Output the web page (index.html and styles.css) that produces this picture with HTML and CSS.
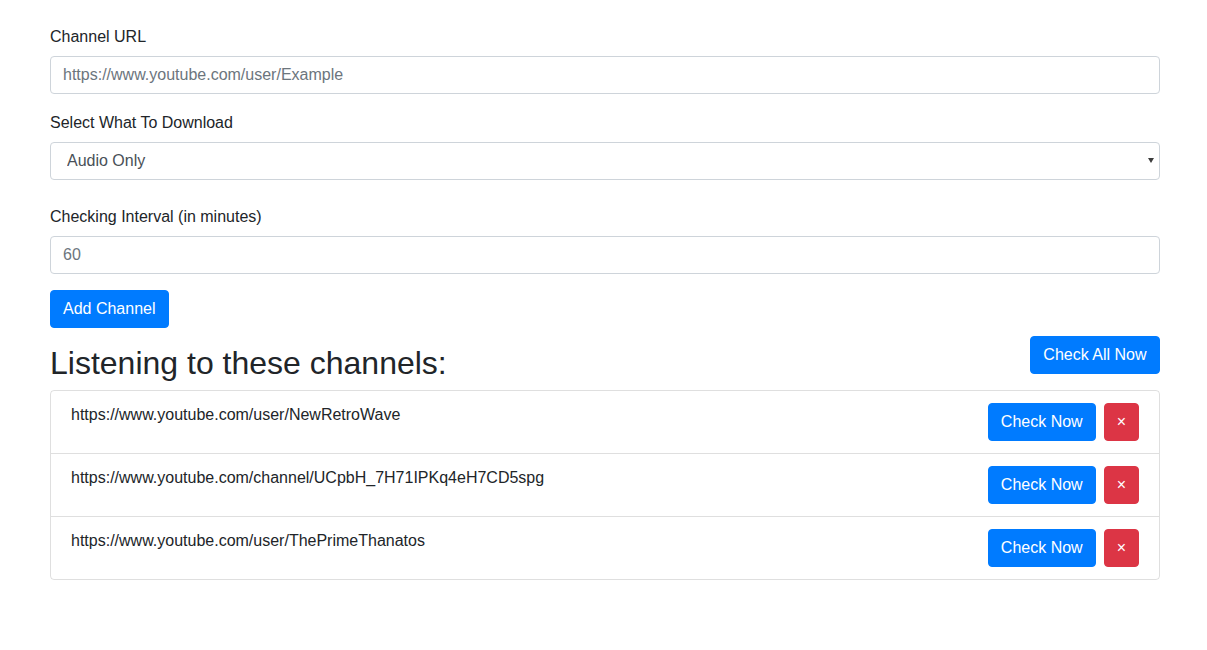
FILE: index.html
```html
<!DOCTYPE html>
<html>
<head>
<meta charset="utf-8">
<link rel="stylesheet" href="styles.css">
</head>
<body>
<div class="container">
  <div class="form-group">
    <label class="label">Channel URL</label>
    <input class="input" type="text" placeholder="https://www.youtube.com/user/Example">
  </div>
  <div class="form-group select-group">
    <label class="label">Select What To Download</label>
    <div class="select-wrap">
      <select class="select">
        <option>Audio Only</option>
      </select>
    </div>
  </div>
  <div class="form-group">
    <label class="label">Checking Interval (in minutes)</label>
    <input class="input" type="text" placeholder="60">
  </div>
  <button class="btn btn-primary">Add Channel</button>
  <div class="list-header">
    <h2 class="title">Listening to these channels:</h2>
    <button class="btn btn-primary btn-all">Check All Now</button>
  </div>
  <ul class="list">
    <li class="item">
      <span class="url">https://www.youtube.com/user/NewRetroWave</span>
      <div class="actions"><button class="btn btn-primary">Check Now</button><button class="btn btn-danger">×</button></div>
    </li>
    <li class="item">
      <span class="url">https://www.youtube.com/channel/UCpbH_7H71IPKq4eH7CD5spg</span>
      <div class="actions"><button class="btn btn-primary">Check Now</button><button class="btn btn-danger">×</button></div>
    </li>
    <li class="item">
      <span class="url">https://www.youtube.com/user/ThePrimeThanatos</span>
      <div class="actions"><button class="btn btn-primary">Check Now</button><button class="btn btn-danger">×</button></div>
    </li>
  </ul>
</div>
</body>
</html>
```

FILE: styles.css
```css
* { box-sizing: border-box; }
html, body { margin: 0; padding: 0; background: #fff; }
body {
  font-family: "Liberation Sans", Arial, sans-serif;
  font-size: 16px;
  line-height: 1.5;
  color: #212529;
}
.container {
  width: 1140px;
  padding: 24px 15px 0 15px;
  margin: 0 0 0 35px;
}
.form-group { margin-bottom: 16px; }
.select-group { margin-bottom: 24px; }
.label {
  display: block;
  margin-bottom: 8px;
  line-height: 24px;
  position: relative;
  top: 1px;
}
.input, .select {
  display: block;
  width: 100%;
  height: 38px;
  padding: 6px 12px;
  font-family: inherit;
  font-size: 16px;
  line-height: 24px;
  color: #495057;
  background: #fff;
  border: 1px solid #ced4da;
  border-radius: 4px;
  outline: none;
}
.input::placeholder { color: #6c757d; opacity: 1; }
.select-wrap { position: relative; }
.select {
  -webkit-appearance: none;
  appearance: none;
  padding-left: 16px;
}
.select-wrap::after {
  content: "";
  position: absolute;
  right: 6px;
  top: 16px;
  border-left: 3.5px solid transparent;
  border-right: 3.5px solid transparent;
  border-top: 5px solid #3c3c3c;
}
.btn {
  display: inline-block;
  height: 38px;
  padding: 6px 12px;
  font-family: inherit;
  font-size: 16px;
  line-height: 24px;
  color: #fff;
  border: 1px solid transparent;
  border-radius: 4px;
  cursor: pointer;
}
.btn-all { padding: 6px 12.5px; }
.btn-primary { background: #007bff; border-color: #007bff; }
.btn-danger { background: #dc3545; border-color: #dc3545; }
.list-header {
  display: flex;
  justify-content: space-between;
  align-items: flex-start;
  margin-top: 8px;
}
.title {
  margin: 8px 0 0 0;
  font-size: 32px;
  font-weight: 500;
  line-height: 38.4px;
}
.list {
  list-style: none;
  margin: 7.6px 0 0 0;
  padding: 0;
  border: 1px solid rgba(0,0,0,.125);
  border-radius: 4px;
}
.item {
  display: flex;
  justify-content: space-between;
  align-items: flex-start;
  padding: 12px 20px;
  border-top: 1px solid rgba(0,0,0,.125);
}
.item:first-child { border-top: none; }
.url { line-height: 24px; margin-top: 0; }
.actions { display: flex; gap: 8px; }
```
